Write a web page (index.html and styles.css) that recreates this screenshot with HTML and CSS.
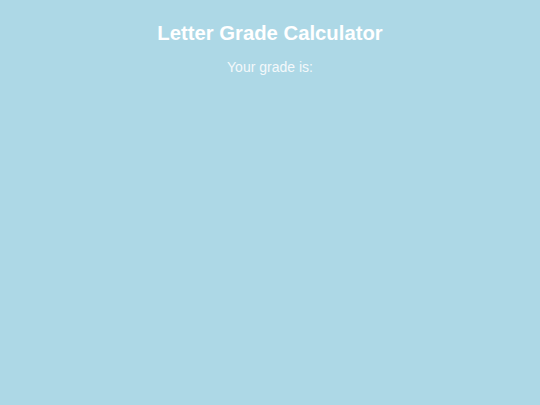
FILE: index.html
```html
<!DOCTYPE html>
<html lang="en">
<head>
<meta charset="UTF-8" />
<meta name="viewport" content="width=device-width, initial-scale=1.0" />
<title>Letter Grade Calculator</title>
<link rel="stylesheet" href="styles.css">
</head>
<body>

<h1>Letter Grade Calculator</h1>
<p class="result">Your grade is: <span id="grade"></span></p>

</body>
</html>
```

FILE: styles.css
```css
body { font-family: "Liberation Sans", Arial, sans-serif; background-color: #add8e6; margin: 8px; text-align: center; color: #fff; }
h1 { font-size: 20.3px; margin: 14px 0 0; }
.result { font-size: 14px; margin: 14px 0; color: #f4f8fb; }
```
